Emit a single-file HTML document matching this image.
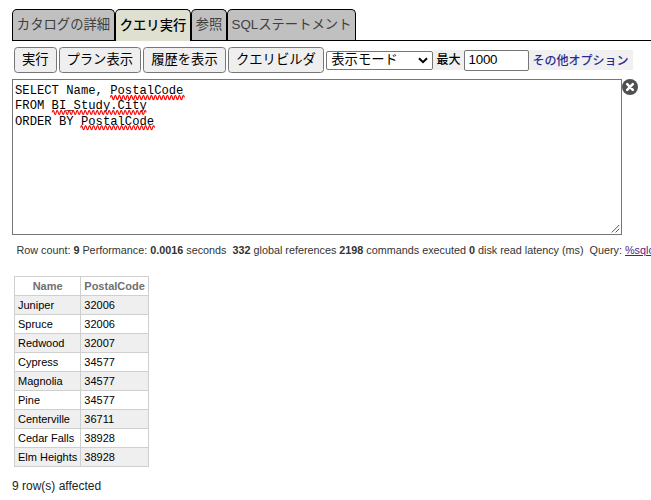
<!DOCTYPE html>
<html lang="ja"><head><meta charset="utf-8">
<title>SQL</title>
<style>
html,body{margin:0;padding:0;background:#fff;}
body{width:651px;height:500px;overflow:hidden;position:relative;font-family:"Liberation Sans","Noto Sans CJK JP",sans-serif;color:#000;}
.abs{position:absolute;white-space:nowrap;}
.tabline{position:absolute;left:12px;top:40px;width:639px;height:1px;background:#000;}
.tab{position:absolute;top:9px;height:31px;box-sizing:border-box;border:1px solid #000;border-bottom:none;border-radius:5px 5px 0 0;background:#c0c0c0;color:#404040;font-size:13.33px;line-height:30px;text-align:center;white-space:nowrap;}
.tab.sel{background:#e0e0d0;color:#000;font-weight:500;height:32px;line-height:32px;}
.btn{position:absolute;top:47px;height:25.6px;box-sizing:border-box;border:1px solid #767676;border-radius:3.5px;background:#efefef;font-size:13.33px;line-height:23px;text-align:center;color:#000;white-space:nowrap;}
.ta{position:absolute;left:12px;top:79px;width:610px;height:155.5px;box-sizing:border-box;border:1px solid #767676;background:#fff;}
.ta pre{position:absolute;left:2px;top:4px;margin:0;font-family:"Liberation Mono","DejaVu Sans Mono",monospace;font-size:12.2px;line-height:15.33px;color:#000;letter-spacing:0.01px;}
table{position:absolute;left:14px;top:276px;border-collapse:collapse;font-size:11px;}
td,th{border:1px solid #cfcfcf;padding:0 3px;height:18px;text-align:left;white-space:nowrap;}
th{color:#707070;text-align:center;background:#fff;}
tr.o td{background:#efefef;}
</style></head><body>
<div class="tabline"></div>
<div class="tab" style="left:12px;width:103px;">カタログの詳細</div>
<div class="tab" style="left:191px;width:36px;">参照</div>
<div class="tab" style="left:227px;width:129px;">SQLステートメント</div>
<div class="tab sel" style="left:115px;width:76px;">クエリ実行</div>

<div class="btn" style="left:14px;width:42.7px;">実行</div>
<div class="btn" style="left:59px;width:81.5px;">プラン表示</div>
<div class="btn" style="left:143.3px;width:82.3px;">履歴を表示</div>
<div class="btn" style="left:228.3px;width:95.3px;">クエリビルダ</div>
<div class="abs" style="left:433px;top:50px;width:199.5px;height:20px;background:#f0f0f0;"></div>
<div class="abs" style="left:326.3px;top:51px;width:106.4px;height:18.7px;box-sizing:border-box;border:1px solid #767676;border-radius:2px;background:#fff;font-size:13.33px;line-height:16px;padding-left:4px;">表示モード
<svg style="position:absolute;right:3.8px;top:4.6px" width="10" height="7" viewBox="0 0 10 7"><path d="M1 1.2 L5 5.2 L9 1.2" fill="none" stroke="#000" stroke-width="2"/></svg></div>
<div class="abs" style="left:436.6px;top:50.4px;font-size:12px;font-weight:500;line-height:20px;">最大</div>
<div class="abs" style="left:464.3px;top:50px;width:64.7px;height:20.7px;box-sizing:border-box;border:1px solid #767676;border-radius:2px;background:#fff;font-size:13.33px;line-height:18.4px;padding-left:3.2px;letter-spacing:-0.2px;">1000</div>
<div class="abs" style="left:532.5px;top:51px;font-size:12px;font-weight:500;line-height:20px;color:#2a2a90;">その他オプション</div>

<div class="ta"><pre>SELECT Name, PostalCode
FROM BI_Study.City
ORDER BY PostalCode</pre>
<svg style="position:absolute;right:1px;bottom:1px" width="10" height="10" viewBox="0 0 10 10"><path d="M1.8 9.4 L9.2 2 M5.6 9.4 L9.2 5.8" stroke="#555" stroke-width="1" fill="none"/></svg>
</div>
<svg class="abs" style="left:0;top:0" width="651" height="140" viewBox="0 0 651 140">
<g fill="none" stroke="#f00" stroke-width="1.15" stroke-linejoin="round">
<path d="M110.4 97.5 q1.0 -4.2 2.0 0 t2.0 0 t2.0 0 t2.0 0 t2.0 0 t2.0 0 t2.0 0 t2.0 0 t2.0 0 t2.0 0 t2.0 0 t2.0 0 t2.0 0 t2.0 0 t2.0 0 t2.0 0 t2.0 0 t2.0 0 t2.0 0 t2.0 0 t2.0 0 t2.0 0 t2.0 0 t2.0 0 t2.0 0 t2.0 0 t2.0 0 t2.0 0 t2.0 0 t2.0 0 t2.0 0 t2.0 0 t2.0 0 t2.0 0 t2.0 0 t2.0 0 t2.0 0"/><path d="M52.2 112.4 q1.0 -4.2 2.0 0 t2.0 0 t2.0 0 t2.0 0 t2.0 0 t2.0 0 t2.0 0 t2.0 0 t2.0 0 t2.0 0 t2.0 0 t2.0 0 t2.0 0 t2.0 0 t2.0 0 t2.0 0 t2.0 0 t2.0 0 t2.0 0 t2.0 0 t2.0 0 t2.0 0 t2.0 0 t2.0 0 t2.0 0 t2.0 0 t2.0 0 t2.0 0 t2.0 0 t2.0 0 t2.0 0 t2.0 0 t2.0 0 t2.0 0 t2.0 0 t2.0 0 t2.0 0 t2.0 0 t2.0 0 t2.0 0 t2.0 0 t2.0 0 t2.0 0 t2.0 0 t2.0 0 t2.0 0 t2.0 0"/><path d="M80.6 127.7 q1.0 -4.2 2.0 0 t2.0 0 t2.0 0 t2.0 0 t2.0 0 t2.0 0 t2.0 0 t2.0 0 t2.0 0 t2.0 0 t2.0 0 t2.0 0 t2.0 0 t2.0 0 t2.0 0 t2.0 0 t2.0 0 t2.0 0 t2.0 0 t2.0 0 t2.0 0 t2.0 0 t2.0 0 t2.0 0 t2.0 0 t2.0 0 t2.0 0 t2.0 0 t2.0 0 t2.0 0 t2.0 0 t2.0 0 t2.0 0 t2.0 0 t2.0 0 t2.0 0 t2.0 0"/>
</g></svg>
<svg class="abs" style="left:622.2px;top:78.9px" width="16" height="16" viewBox="0 0 16 16"><circle cx="8" cy="8" r="8" fill="#505050"/><path d="M5.2 5.2 L10.8 10.8 M10.8 5.2 L5.2 10.8" stroke="#fff" stroke-width="2.6" stroke-linecap="round"/></svg>
<div id="st" class="abs" style="left:16.4px;top:242.6px;font-size:10.8px;line-height:14px;color:#333;">Row count: <b>9</b> Performance: <b>0.0016</b> seconds&nbsp; <b>332</b> global references <b>2198</b> commands executed <b>0</b> disk read latency (ms)&nbsp; Query: <span style="color:#551a8b;text-decoration:underline">%sqlcq.USER.cls12</span></div>
<table>
<tr><th>Name</th><th>PostalCode</th></tr>
<tr class="o"><td>Juniper</td><td>32006</td></tr>
<tr><td>Spruce</td><td>32006</td></tr>
<tr class="o"><td>Redwood</td><td>32007</td></tr>
<tr><td>Cypress</td><td>34577</td></tr>
<tr class="o"><td>Magnolia</td><td>34577</td></tr>
<tr><td>Pine</td><td>34577</td></tr>
<tr class="o"><td>Centerville</td><td>36711</td></tr>
<tr><td>Cedar Falls</td><td>38928</td></tr>
<tr class="o"><td>Elm Heights</td><td>38928</td></tr>
</table>
<div class="abs" style="left:12px;top:479px;font-size:12px;line-height:14px;color:#222;">9 row(s) affected</div>
</body></html>
